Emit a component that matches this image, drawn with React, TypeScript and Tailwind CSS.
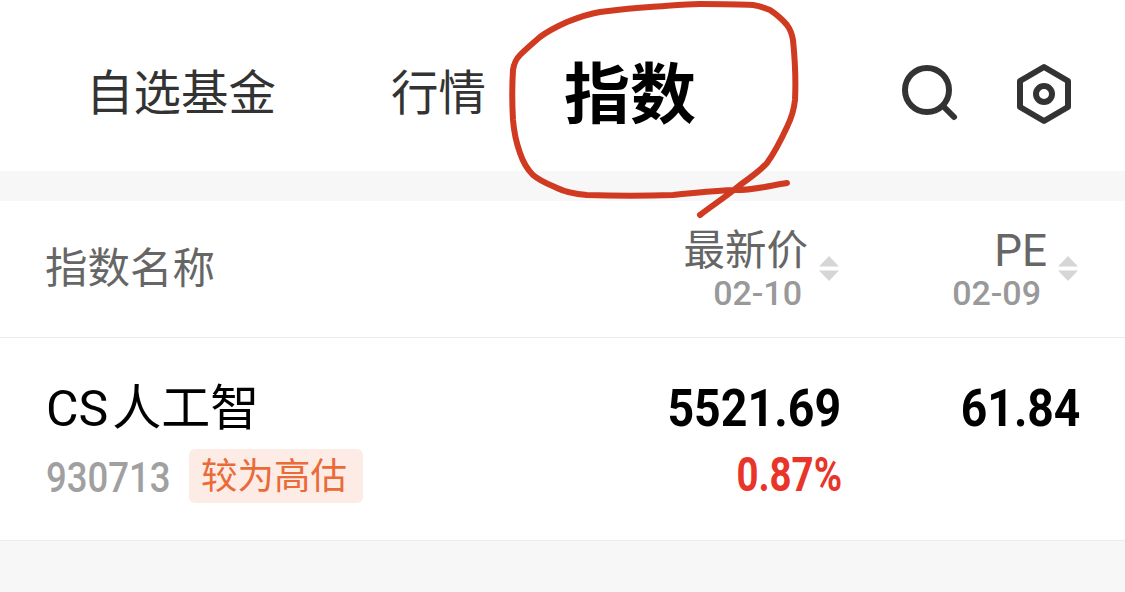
import React from "react";

const cjk = "font-['Roboto','Noto_Sans_CJK_SC',sans-serif]";

const SortArrows = () => (
    <svg width="20" height="25" viewBox="0 0 20 25" className="shrink-0 -translate-y-[1px]">
        <path d="M10 0 L20 10.5 H0 Z" fill="#d6d6d6" />
        <path d="M10 25 L20 14.5 H0 Z" fill="#d6d6d6" />
    </svg>
);

const App = (): React.JSX.Element => {
    return (
        <div className={`relative flex h-[592px] w-[1125px] flex-col overflow-hidden bg-[#f7f7f7] ${cjk}`}>
            {/* Barre d'onglets */}
            <div className="flex h-[171px] items-center bg-white pt-[18px]">
                <span className="ml-[86px] w-[305px] text-[47.5px] leading-none text-[#333]">自选基金</span>
                <span className="w-[173px] text-[47.5px] leading-none text-[#333]">行情</span>
                <span className="w-[336px] translate-y-[1px] text-[66px] font-bold leading-none text-black">指数</span>
                <svg width="60" height="60" viewBox="0 0 60 60" fill="none" stroke="#333" strokeWidth="6" strokeLinecap="round" className="shrink-0 -translate-y-[1px]">
                    <circle cx="27" cy="26" r="22" />
                    <path d="M44 43 L54 53" />
                </svg>
                <svg width="60" height="62" viewBox="0 0 60 62" fill="none" stroke="#333" strokeWidth="6" strokeLinejoin="round" className="ml-[54px] shrink-0 -translate-y-[1px]">
                    <path d="M30 4 L54 18 V44 L30 58 L6 44 V18 Z" />
                    <circle cx="30" cy="31" r="8" />
                </svg>
            </div>

            {/* En-tête du tableau */}
            <div className="mt-[30px] flex h-[137px] items-center border-b border-[#ececec] bg-white pr-[47px] pl-[45px]">
                <span className="flex-1 text-[42.5px] leading-none text-[#666]">指数名称</span>
                <div className="flex w-[160px] flex-col items-end">
                    <span className="pr-[11px] text-[41.5px] leading-[48px] text-[#666]">最新价</span>
                    <span className="pr-[17px] text-[34px] leading-[37px] font-medium text-[#999]">02-10</span>
                </div>
                <SortArrows />
                <div className="flex w-[219px] flex-col items-end">
                    <span className="pr-[11px] text-[44px] leading-[48px] text-[#666]">PE</span>
                    <span className="pr-[17px] text-[34px] leading-[37px] font-medium text-[#999]">02-09</span>
                </div>
                <SortArrows />
            </div>

            {/* Ligne */}
            <div className="flex h-[203px] items-start justify-between border-b border-[#ececec] bg-white pr-[45px] pl-[46px] pt-[41px]">
                <div className="flex flex-col">
                    <div className="flex items-center text-[49px] leading-[60px] text-black">
                        <span className="text-[50px]">CS</span>
                        <span className="ml-[4px]">人工智</span>
                    </div>
                    <div className="mt-[10px] flex items-center">
                        <span className="w-[143px] origin-left translate-y-[1px] scale-x-[0.85] text-[43px] leading-none font-medium text-[#a0a0a0]">930713</span>
                        <span className="flex h-[54px] w-[174px] items-center justify-center rounded-[6px] bg-[#fcece5] pt-[2px] pr-[4px] text-[36.5px] leading-none text-[#ea6a38]">较为高估</span>
                    </div>
                </div>
                <div className="flex gap-[104px]">
                    <div className="flex flex-col items-end">
                        <span className="origin-right scale-x-[0.895] text-[52px] leading-[60px] font-bold text-black">5521.69</span>
                        <span className="mt-[10px] origin-right scale-x-[0.8] text-[48px] leading-[52px] font-bold text-[#e9342a]">0.87%</span>
                    </div>
                    <span className="origin-right scale-x-[0.89] text-[52px] leading-[60px] font-bold text-black">61.84</span>
                </div>
            </div>

            {/* Annotation à la main */}
            <svg width="1125" height="592" viewBox="0 0 1125 592" fill="none" className="pointer-events-none absolute inset-0">
                <path
                    d="M787 183 C768 186 750 191 733 190 C712 191 692 193 673 195 C645 196 615 196 587 195 C575 194 565 192 557 188 C548 184 540 181 533 175 C527 169 523 162 520 153 C516 142 514 132 513 120 C512 103 512 86 513 70 C514 63 516 59 520 55 C526 49 533 43 540 37 C548 31 558 26 567 22 C577 18 588 14 600 12 C616 10 633 8 650 7 C667 6 684 4 700 4 C718 4 736 4 753 5 C760 6 765 8 770 10 C776 14 782 19 787 25 C790 29 792 34 793 40 C795 60 796 80 795 100 C794 110 791 119 787 127 C781 140 775 152 767 163 C760 171 750 178 740 185 C727 196 713 205 700 215"
                    stroke="#d03a20"
                    strokeWidth="6"
                    strokeLinecap="round"
                    strokeLinejoin="round"
                />
            </svg>
        </div>
    );
};

export default App;
